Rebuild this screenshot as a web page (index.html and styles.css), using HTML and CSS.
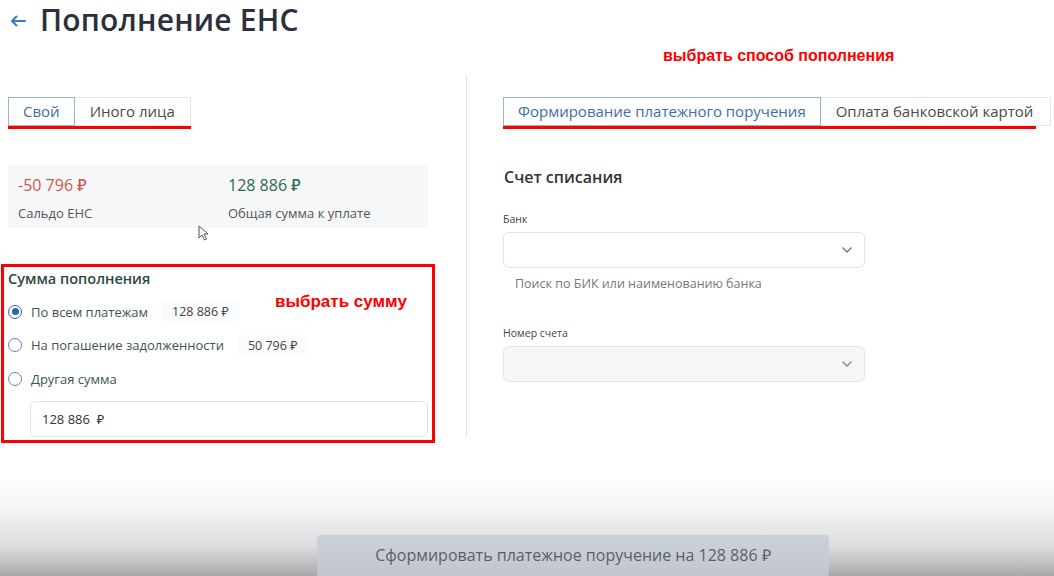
FILE: index.html
```html
<!DOCTYPE html>
<html lang="ru">
<head>
    <meta charset="UTF-8">
    <title>Пополнение ЕНС</title>
    <link rel="stylesheet" href="styles.css">
</head>
<body>
    <header class="top">
        <svg class="back" width="16" height="12" viewBox="0 0 16 12">
            <path d="M15 6 H2 M6.5 1.5 L2 6 L6.5 10.5" fill="none" stroke="#3a78c2" stroke-width="2" stroke-linecap="round" stroke-linejoin="round"/>
        </svg>
        <h1>Пополнение ЕНС</h1>
    </header>

    <div class="note note-method">выбрать способ пополнения</div>

    <main class="columns">
        <section class="col col-left">
            <div class="tabs tabs-marked">
                <div class="tab active">Свой</div>
                <div class="tab">Иного лица</div>
            </div>

            <div class="summary">
                <div class="sum-item">
                    <div class="sum-value debt">-50 796 ₽</div>
                    <div class="sum-label">Сальдо ЕНС</div>
                </div>
                <div class="sum-item">
                    <div class="sum-value total">128 886 ₽</div>
                    <div class="sum-label">Общая сумма к уплате</div>
                </div>
                <svg class="cursor" width="12" height="16" viewBox="0 0 12 16">
                    <path d="M1 1 L1 13 L4 10 L6.5 15 L8.5 14 L6 9 L10 9 Z" fill="#fff" stroke="#555" stroke-width="1"/>
                </svg>
            </div>

            <div class="amount">
                <div class="mark-box"></div>
                <div class="note note-sum">выбрать сумму</div>
                <h3>Сумма пополнения</h3>
                <label class="radio-row">
                    <span class="radio checked"></span>
                    <span>По всем платежам</span>
                    <span class="chip">128 886 ₽</span>
                </label>
                <label class="radio-row">
                    <span class="radio"></span>
                    <span>На погашение задолженности</span>
                    <span class="chip">50 796 ₽</span>
                </label>
                <label class="radio-row">
                    <span class="radio"></span>
                    <span>Другая сумма</span>
                </label>
                <div class="amount-input">128 886 &nbsp;₽</div>
            </div>
        </section>

        <section class="col col-right">
            <div class="tabs tabs-marked">
                <div class="tab active">Формирование платежного поручения</div>
                <div class="tab">Оплата банковской картой</div>
            </div>

            <h2>Счет списания</h2>

            <div class="field">
                <div class="field-label">Банк</div>
                <div class="select">
                    <svg width="12" height="8" viewBox="0 0 12 8"><path d="M1.5 1.5 L6 6 L10.5 1.5" fill="none" stroke="#777" stroke-width="1.3"/></svg>
                </div>
                <div class="field-hint">Поиск по БИК или наименованию банка</div>
            </div>

            <div class="field">
                <div class="field-label">Номер счета</div>
                <div class="select disabled">
                    <svg width="12" height="8" viewBox="0 0 12 8"><path d="M1.5 1.5 L6 6 L10.5 1.5" fill="none" stroke="#888" stroke-width="1.3"/></svg>
                </div>
            </div>
        </section>
    </main>

    <footer class="bottom">
        <button class="submit">Сформировать платежное поручение на 128 886 ₽</button>
    </footer>
</body>
</html>
```

FILE: styles.css
```css
body {
    margin: 0;
    font-family: "Open Sans", "Noto Sans", sans-serif;
    background-color: #fff;
    color: #333;
    width: 1054px;
    height: 576px;
    overflow: hidden;
    position: relative;
}
.top {
    display: flex;
    align-items: center;
    height: 38px;
    padding-left: 10px;
}
.back {
    margin-right: 14px;
    margin-top: 3px;
}
h1 {
    margin: 0;
    font-size: 30px;
    font-weight: 600;
    color: #2c303c;
    letter-spacing: 0.2px;
}
.note {
    position: absolute;
    color: #f00;
    font-family: "Liberation Sans", Arial, sans-serif;
    font-weight: bold;
}
.note-method {
    left: 663px;
    top: 47px;
    font-size: 16px;
}
.columns {
    display: grid;
    grid-template-columns: 467px 1fr;
    margin-top: 37px;
}
.col {
    padding-top: 22px;
}
.col-left {
    padding-left: 8px;
    padding-right: 36px;
    border-right: 1px solid #e2e2e2;
    height: 340px;
}
.col-right {
    padding-left: 36px;
}
.tabs {
    display: flex;
    width: fit-content;
    position: relative;
}
.tabs-marked::after {
    content: "";
    position: absolute;
    left: 0;
    right: 0;
    bottom: -3px;
    height: 3px;
    background-color: #f00;
}
.tab {
    height: 27px;
    line-height: 27px;
    padding: 0 15px;
    font-size: 15px;
    color: #4a4a4a;
    border: 1px solid #e6e6e6;
    border-left: none;
}
.tab.active {
    color: #3d6ea8;
    border: 1px solid #93b3d8;
    padding: 0 14px;
}
.col-right .tab:last-child {
    padding-right: 17px;
}
.col-right .tabs-marked::after {
    right: 15px;
}
.summary {
    margin-top: 39px;
    height: 63px;
    background-color: #f5f7f9;
    display: grid;
    grid-template-columns: 210px 1fr;
    padding-left: 10px;
    margin-right: 2px;
    position: relative;
}
.sum-value {
    font-size: 16px;
    font-weight: 500;
    margin-top: 9px;
}
.debt {
    color: #d2564c;
}
.total {
    color: #2f6a52;
}
.sum-label {
    font-size: 13px;
    color: #555;
    margin-top: 8px;
}
.cursor {
    position: absolute;
    left: 190px;
    top: 60px;
}
.amount {
    position: relative;
    margin-top: 36px;
    padding-top: 5px;
}
.mark-box {
    position: absolute;
    left: -7px;
    top: 0;
    width: 428px;
    height: 173px;
    border: 3px solid #f00;
}
.note-sum {
    left: 267px;
    top: 28px;
    font-size: 17px;
}
h3 {
    margin: 0 0 6px 0;
    font-size: 14.5px;
    font-weight: 600;
    color: #2f4744;
    line-height: 20px;
}
.radio-row {
    display: flex;
    align-items: center;
    height: 33.5px;
    font-size: 13px;
    color: #3d5552;
}
.radio {
    width: 12px;
    height: 12px;
    border: 1.5px solid #6a86a8;
    border-radius: 50%;
    margin-right: 9px;
    box-sizing: content-box;
    position: relative;
}
.radio.checked {
    border-color: #2f63b4;
}
.radio.checked::after {
    content: "";
    position: absolute;
    left: 2.5px;
    top: 2.5px;
    width: 7px;
    height: 7px;
    border-radius: 50%;
    background-color: #2f63b4;
}
.chip {
    margin-left: 14px;
    padding: 2px 10px;
    background-color: #fafbfc;
    border-radius: 4px;
    color: #444;
    font-size: 12.5px;
}
.amount-input {
    margin: 5px 2px 0 22px;
    height: 34px;
    line-height: 34px;
    border: 1px solid #e3e3e3;
    border-radius: 6px;
    padding-left: 11px;
    font-size: 13px;
    color: #333;
}
h2 {
    margin: 41px 0 0 1px;
    font-size: 16px;
    font-weight: 600;
    color: #333;
    line-height: 20px;
}
.field {
    width: 362px;
    margin-top: 25px;
}
.field + .field {
    margin-top: 34px;
}
.field-label {
    font-size: 10.5px;
    color: #444;
    margin-bottom: 6px;
}
.select {
    height: 34px;
    border: 1px solid #e3e3e3;
    border-radius: 6px;
    display: flex;
    align-items: center;
    justify-content: flex-end;
    padding-right: 11px;
}
.select.disabled {
    background-color: #f5f6f8;
}
.field-hint {
    font-size: 12.5px;
    color: #777;
    margin: 7px 0 0 12px;
}
.bottom {
    position: absolute;
    left: 0;
    right: 0;
    bottom: 0;
    height: 96px;
    background: linear-gradient(to bottom, #fdfdfd 0%, #f4f4f5 30%, #dcdcdf 70%, #a9a9ab 100%);
    display: flex;
    justify-content: center;
}
.submit {
    margin-top: 55px;
    margin-left: 92px;
    width: 512px;
    height: 42px;
    border: none;
    border-radius: 4px;
    background: linear-gradient(to bottom, #cdd2da, #c1c6ce);
    color: #5a606a;
    font-family: "Open Sans", sans-serif;
    font-size: 16px;
    padding-bottom: 4px;
}
```
